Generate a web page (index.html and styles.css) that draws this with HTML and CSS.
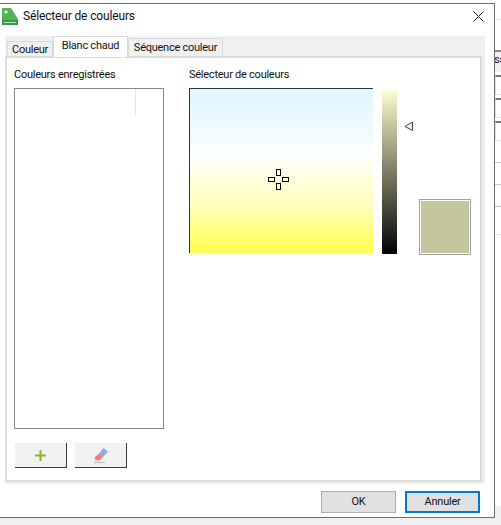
FILE: index.html
```html
<!DOCTYPE html>
<html lang="fr">

<head>
    <meta charset="UTF-8" />
    <title>Sélecteur de couleurs</title>
    <link rel="stylesheet" href="styles.css">
</head>

<body>
    <div class="main-col">
        <div class="dialog">
            <div class="titlebar">
                <svg class="app-icon" width="16" height="17" viewBox="0 0 16 17">
                    <polygon points="0,0 9,0 16,11 16,17 0,17" fill="#4fb455" />
                    <rect x="0" y="12" width="16" height="5" fill="#3a9d45" />
                    <rect x="2" y="14" width="12" height="1" fill="#bfe6c2" />
                    <circle cx="4" cy="4" r="1.6" fill="#fff" />
                </svg>
                <span class="title">Sélecteur de couleurs</span>
                <svg class="close" width="11" height="11" viewBox="0 0 11 11">
                    <path d="M0.5 0.5 L10.5 10.5 M10.5 0.5 L0.5 10.5" stroke="#222" stroke-width="1" fill="none" />
                </svg>
            </div>

            <div class="tabcontrol">
                <div class="tabs">
                    <div class="tab tab-first">Couleur</div>
                    <div class="tab tab-active">Blanc chaud</div>
                    <div class="tab tab-last">Séquence couleur</div>
                </div>
                <div class="panel">
                    <div class="saved">
                        <div class="label">Couleurs enregistrées</div>
                        <div class="saved-list"><div class="saved-col"></div></div>
                        <div class="tools">
                            <button class="tool">
                                <svg width="13" height="13" viewBox="0 0 13 13">
                                    <path d="M6.5 1 V12 M1 6.5 H12" stroke="#8ab71f" stroke-width="2" fill="none" />
                                </svg>
                            </button>
                            <button class="tool">
                                <svg width="14" height="15" viewBox="0 0 14 15">
                                    <polygon points="9.5,0 14,3.5 9.5,8.5 5.5,5" fill="#82b0e8" />
                                    <polygon points="5.5,5 9.5,8.5 5.5,12.5 1.5,12.5 0.5,9.5" fill="#e88488" />
                                    <rect x="0" y="14" width="11" height="1" fill="#bbb" />
                                </svg>
                            </button>
                        </div>
                    </div>

                    <div class="selector">
                        <div class="label">Sélecteur de couleurs</div>
                        <div class="selector-row">
                            <div class="field">
                                <svg class="cross" width="21" height="21" viewBox="0 0 21 21">
                                    <g fill="none" stroke="#000" stroke-width="1">
                                        <rect x="8.5" y="0.5" width="4" height="6" />
                                        <rect x="8.5" y="14.5" width="4" height="6" />
                                        <rect x="0.5" y="8.5" width="6" height="4" />
                                        <rect x="14.5" y="8.5" width="6" height="4" />
                                    </g>
                                </svg>
                            </div>
                            <div class="slider"></div>
                            <div class="side-tools">
                                <svg class="pointer" width="10" height="11" viewBox="0 0 10 11">
                                    <polygon points="8.5,1 8.5,9.5 1,5.5" fill="#eee" stroke="#444" stroke-width="1" />
                                </svg>
                                <div class="swatch"></div>
                            </div>
                        </div>
                    </div>
                </div>
            </div>

            <div class="actions">
                <button class="btn">OK</button>
                <button class="btn btn-default">Annuler</button>
            </div>
        </div>
        <div class="under"></div>
    </div>

    <div class="behind">
        <div class="behind-line line-a"></div>
        <div class="behind-head">ss</div>
        <div class="behind-box"></div>
        <div class="behind-box"></div>
        <div class="behind-box"></div>
        <div class="behind-row"></div>
        <div class="behind-row"></div>
        <div class="behind-row"></div>
        <div class="behind-row behind-row-tall"></div>
        <div class="behind-fill"></div>
        <div class="behind-under"></div>
    </div>
</body>

</html>
```

FILE: styles.css
```css
* {
    box-sizing: border-box;
}

html,
body {
    margin: 0;
    height: 525px;
    overflow: hidden;
}

body {
    display: flex;
    background: #fff;
    font-family: Roboto, "Open Sans", sans-serif;
    font-size: 11px;
    letter-spacing: -0.25px;
    color: #111;
}

.main-col {
    width: 495px;
    padding-top: 3px;
    display: flex;
    flex-direction: column;
}

.dialog {
    height: 515px;
    background: #fff;
    border-top: 1px solid #6e6e6e;
    border-right: 1px solid #6e6e6e;
    border-bottom: 1px solid #6e6e6e;
    display: flex;
    flex-direction: column;
    padding-bottom: 4px;
}

.under {
    flex: 1;
    background: #f0f0f0;
}

.titlebar {
    height: 32px;
    display: flex;
    align-items: center;
    padding: 0 10px 8px 2px;
}

.title {
    margin-left: 5px;
    font-size: 12px;
    letter-spacing: -0.15px;
}

.close {
    margin-left: auto;
}

.tabcontrol {
    margin-left: 5px;
    width: 480px;
    height: 448px;
    background: #f0f0f0;
    display: flex;
    flex-direction: column;
    padding-bottom: 2px;
}

.tabs {
    height: 20px;
    display: flex;
    align-items: flex-end;
    position: relative;
    z-index: 1;
}

.tab {
    border: 1px solid #d9d9d9;
    border-bottom: none;
    background: #f0f0f0;
    height: 18px;
    padding-top: 2px;
    text-align: center;
    white-space: nowrap;
}

.tab-first {
    margin-left: 2px;
    width: 46px;
    height: 15px;
    padding-top: 0;
    line-height: 15px;
}

.tab-active {
    width: 75px;
    height: 21px;
    margin-bottom: -1px;
    background: #fff;
    border-color: #d9d9d9;
}

.tab-last {
    width: 95px;
}

.panel {
    flex: 1;
    width: 477px;
    background: #fff;
    border: 2px solid #dcdcdc;
    display: flex;
    padding-left: 7px;
}

.label {
    height: 30px;
    padding-top: 10px;
}

.saved {
    width: 150px;
}

.saved-list {
    width: 150px;
    height: 341px;
    border: 1px solid #84888c;
    background: #fff;
}

.saved-col {
    width: 121px;
    height: 26px;
    border-right: 1px solid #e4e4e4;
}

.tools {
    margin-top: 14px;
    margin-left: 1px;
    display: flex;
    gap: 8px;
}

.tool {
    width: 52px;
    height: 25px;
    padding: 0;
    background: #f2f2f2;
    border: none;
    border-right: 1px solid #3c3c3c;
    border-bottom: 1px solid #3c3c3c;
    display: flex;
    align-items: center;
    justify-content: center;
}

.selector {
    margin-left: 25px;
}

.selector-row {
    display: flex;
}

.field {
    width: 184px;
    height: 165px;
    border-top: 1px solid #333;
    border-left: 1px solid #333;
    background: linear-gradient(#e0f6ff 0%, #f2fbff 30%, #ffffff 40%, #ffffb8 72%, #ffff4d 100%);
    position: relative;
}

.cross {
    position: absolute;
    left: 78px;
    top: 80px;
}

.slider {
    width: 15px;
    height: 165px;
    margin-left: 9px;
    margin-top: 1px;
    background: linear-gradient(#ffffd8 0%, #c5c5a0 22%, #7d7d66 50%, #3a3a30 78%, #000 100%);
}

.side-tools {
    margin-left: 7px;
    display: flex;
    flex-direction: column;
}

.pointer {
    margin-top: 33px;
}

.swatch {
    margin-top: 67px;
    margin-left: 15px;
    width: 52px;
    height: 56px;
    background: #c5c5a0;
    border: 2px solid #fff;
    outline: 1px solid #a0a0a0;
    outline-offset: -1px;
}

.actions {
    flex: 1;
    display: flex;
    align-items: flex-end;
    justify-content: flex-end;
    gap: 9px;
    padding-right: 14px;
}

.btn {
    width: 75px;
    height: 22px;
    padding: 0 0 2px;
    background: #e1e1e1;
    border: 1px solid #adadad;
    font: inherit;
    letter-spacing: inherit;
    color: #111;
}

.btn-default {
    border: 2px solid #0078d7;
}

.behind {
    width: 6px;
    display: flex;
    flex-direction: column;
    background: #fff;
    overflow: hidden;
}

.behind-line {
    height: 1px;
    background: #e4e4e4;
}

.line-a {
    margin-top: 19px;
}

.behind-head {
    margin-top: 30px;
    height: 22px;
    border-top: 2px solid #888;
    background: #f0f0f0;
    line-height: 16px;
    margin-left: -1px;
    white-space: nowrap;
    font-size: 11px;
}

.behind-box {
    margin-top: 3px;
    height: 20px;
    border-top: 2px solid #777;
    border-left: 1px solid #ddd;
    border-bottom: 1px solid #e4e4e4;
}

.behind-row {
    height: 22px;
    border-bottom: 1px solid #c8c8c8;
}

.behind-row-tall {
    height: 28px;
    border-bottom-color: #e4e4e4;
}

.behind-fill {
    flex: 1;
}

.behind-under {
    height: 19px;
    background: #f0f0f0;
}
```
